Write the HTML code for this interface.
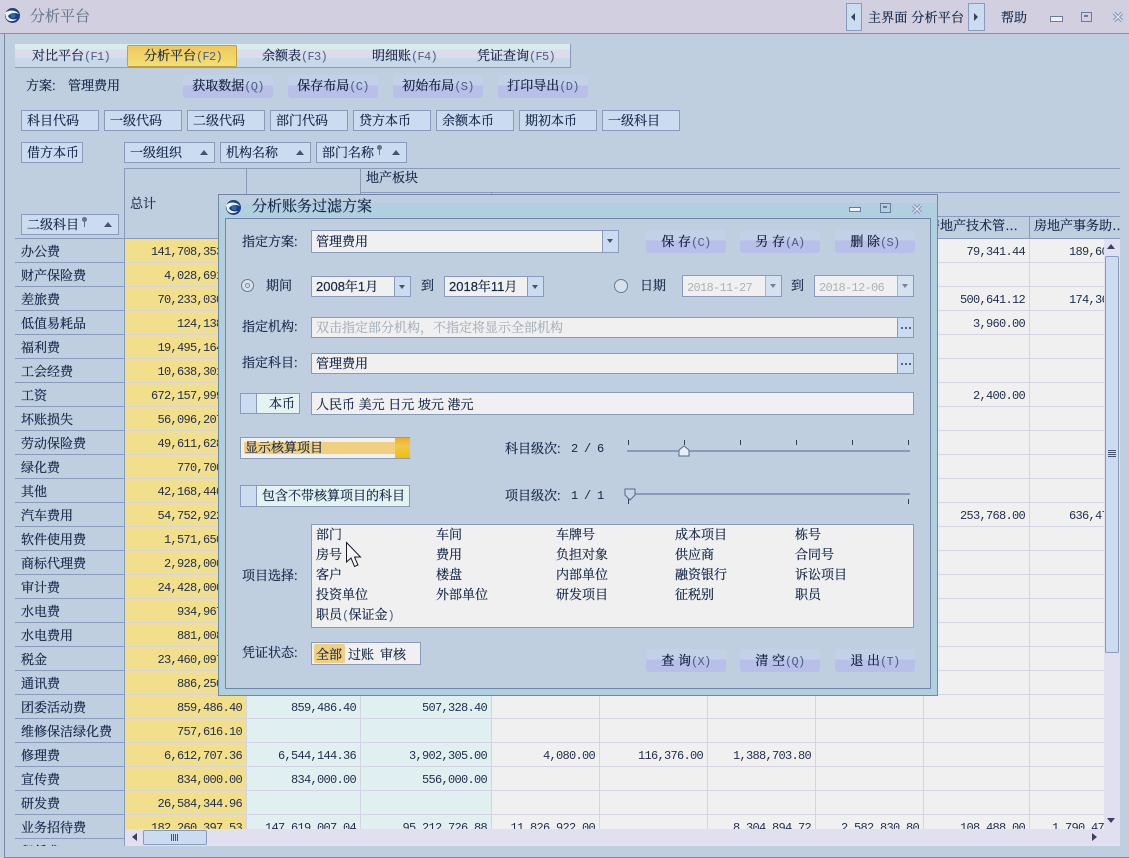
<!DOCTYPE html>
<html><head><meta charset="utf-8"><style>
html,body{margin:0;padding:0}
body{width:1129px;height:858px;overflow:hidden;position:relative;background:#bfcfe0;font:13px/22px "Liberation Sans","Noto Serif CJK SC","WenQuanYi Zen Hei",serif;color:#142648;-webkit-text-stroke:.2px}
.a{position:absolute;white-space:nowrap}
.m{font-family:"Liberation Mono",monospace;font-size:12px;letter-spacing:-.7px;-webkit-text-stroke:0}
.h{color:#4a6088}
.pb{position:absolute;box-sizing:border-box;height:21px;line-height:20px;border:1.5px solid #8a9abd;background:#ccdcf0;padding-left:5px;white-space:nowrap;letter-spacing:0}
.tri{position:absolute;width:0;height:0;border-left:4px solid transparent;border-right:4px solid transparent;border-bottom:5px solid #4a5070}
.btn{position:absolute;box-sizing:border-box;width:80px;height:23px;line-height:24px;text-align:center;border-radius:3px;background:linear-gradient(#c2d0e8 0,#c2d0e8 45%,#b8bfe8 45%,#b8bfe8 100%);white-space:nowrap;color:#101c38}
.fld{position:absolute;box-sizing:border-box;border:1.5px solid #8a9abd;background:#f0f0f0;padding-left:4px;white-space:nowrap}
.arr{position:absolute;right:0;top:0;bottom:0;width:15px;background:#ccdcf0;border-left:1.5px solid #8a9abd}
.arr:after{content:"";position:absolute;left:4px;top:8px;border-left:3px solid transparent;border-right:3px solid transparent;border-top:4px solid #4a5070}
.dots:after{content:"";position:absolute;left:3px;top:9px;width:2px;height:2px;background:#5a6080;box-shadow:4px 0 #5a6080,8px 0 #5a6080;border:0}
.r{position:absolute;left:15px;width:1089px;height:24px;box-sizing:border-box}
.r b{position:absolute;left:0;top:0;width:110px;height:24px;box-sizing:border-box;font-weight:normal;line-height:26px;padding-left:6px;background:#bfcfe0;border-bottom:1.5px solid #8a9abd;border-right:1.5px solid #8a9abd}
.r i{position:absolute;top:0;height:24px;box-sizing:border-box;font-style:normal;text-align:right;padding-right:4px;line-height:26px;background:#f0f0f0;border-bottom:1.5px solid #d4d4e4;border-right:1.5px solid #d4d4e4;font-family:"Liberation Mono",monospace;font-size:12px;letter-spacing:-.7px;color:#22304e;overflow:hidden;white-space:nowrap;-webkit-text-stroke:0}
.c0{left:110px;width:122px;background:#f2df8b!important}
.c1{left:232px;width:114px;background:#e0f0f0!important}
.c2{left:346px;width:131px;background:#e0f0f0!important}
.c3{left:477px;width:108px}.c4{left:585px;width:108px}.c5{left:693px;width:108px}.c6{left:801px;width:108px}
.c7{left:909px;width:106px}.c8{left:1015px;width:74px;border-right:0!important;padding-right:0!important;text-align:left!important;padding-left:0}
.line{position:absolute;background:#8a9abd}
</style></head><body>

<!-- title bar -->
<div class="a" style="left:0;top:0;width:1129px;height:33px;background:#d2d0e0;border-bottom:1.5px solid #8a90b0"></div>
<svg class="a" style="left:4px;top:7px" width="17" height="17" viewBox="0 0 17 17"><circle cx="8.5" cy="8.5" r="7.5" fill="#1c3f80"/><path d="M1 6C5 2 12 3 15 7C11 5 6 6 4 9C5 12 9 13 13 12C10 15 4 15 2 11Z" fill="#e8f0f8"/><circle cx="9" cy="8.5" r="2.6" fill="#2a68b0"/></svg>
<div class="a" style="left:30px;top:5px;font-size:15px;color:#6a7a90;letter-spacing:0;line-height:24px">分析平台</div>
<div class="a" style="left:846px;top:3px;width:16px;height:28px;box-sizing:border-box;background:#ccdcf0;border:1.5px solid #8a9abd"></div>
<div class="a" style="left:851px;top:13px;border-top:4px solid transparent;border-bottom:4px solid transparent;border-right:4px solid #3a4060"></div>
<div class="a" style="left:868px;top:7px;font-size:13px;letter-spacing:.2px">主界面 分析平台</div>
<div class="a" style="left:968px;top:3px;width:17px;height:28px;box-sizing:border-box;background:#ccdcf0;border:1.5px solid #8a9abd"></div>
<div class="a" style="left:974px;top:13px;border-top:4px solid transparent;border-bottom:4px solid transparent;border-left:4px solid #3a4060"></div>
<div class="a" style="left:1001px;top:7px">帮助</div>
<div class="a" style="left:1050px;top:16px;width:11px;height:4px;border:1px solid #6a7aa0;background:#f0f0f8"></div>
<div class="a" style="left:1081px;top:12px;width:9px;height:8px;border:1px solid #6a7aa0"></div>
<div class="a" style="left:1084px;top:15px;width:4px;height:2px;background:#6a7aa0"></div>
<svg class="a" style="left:1112px;top:11px" width="12" height="12"><path d="M2 2L10 10M10 2L2 10" stroke="#8a9abd" stroke-width="3.5"/><path d="M2 2L10 10M10 2L2 10" stroke="#e4ecf4" stroke-width="1.2"/></svg>

<!-- main frame -->
<div class="a" style="left:4px;top:33px;width:1px;height:825px;background:#7a88a8"></div>
<div class="a" style="left:4px;top:857px;width:1125px;height:1px;background:#7a88a8"></div>

<!-- tabs -->
<div class="a" style="left:15px;top:44px;width:556px;height:24px;box-sizing:border-box;border-bottom:1.5px solid #8a9abd;border-right:1px solid #8a9abd;background:linear-gradient(#d8eeea 0,#d8eeea 25%,#dcdcec 25%,#dcdcec 60%,#c8d8e8 60%)"></div>
<div class="a" style="left:127px;top:45px;width:110px;height:22px;box-sizing:border-box;border:1px solid #c0a040;border-radius:2px;background:linear-gradient(#f0c860,#f2e070)"></div>
<div class="a" style="left:32px;top:45px">对比平台<span class="m h">(F1)</span></div>
<div class="a" style="left:144px;top:45px">分析平台<span class="m h">(F2)</span></div>
<div class="a" style="left:262px;top:45px">余额表<span class="m h">(F3)</span></div>
<div class="a" style="left:372px;top:45px">明细账<span class="m h">(F4)</span></div>
<div class="a" style="left:477px;top:45px">凭证查询<span class="m h">(F5)</span></div>

<!-- toolbar -->
<div class="a" style="left:26px;top:75px">方案: </div>
<div class="a" style="left:68px;top:75px">管理费用</div>
<div class="btn" style="left:183px;top:75px;width:90px;line-height:22px">获取数据<span class="m h">(Q)</span></div>
<div class="btn" style="left:288px;top:75px;width:90px;line-height:22px">保存布局<span class="m h">(C)</span></div>
<div class="btn" style="left:393px;top:75px;width:90px;line-height:22px">初始布局<span class="m h">(S)</span></div>
<div class="btn" style="left:498px;top:75px;width:90px;line-height:22px">打印导出<span class="m h">(D)</span></div>

<!-- pivot fields -->
<div class="pb" style="left:21px;top:110px;width:78px">科目代码</div>
<div class="pb" style="left:104px;top:110px;width:78px">一级代码</div>
<div class="pb" style="left:187px;top:110px;width:78px">二级代码</div>
<div class="pb" style="left:270px;top:110px;width:78px">部门代码</div>
<div class="pb" style="left:353px;top:110px;width:78px">贷方本币</div>
<div class="pb" style="left:436px;top:110px;width:78px">余额本币</div>
<div class="pb" style="left:519px;top:110px;width:78px">期初本币</div>
<div class="pb" style="left:602px;top:110px;width:78px">一级科目</div>
<div class="pb" style="left:21px;top:142px;width:62px">借方本币</div>
<div class="pb" style="left:124px;top:142px;width:91px">一级组织<span class="tri" style="left:75px;top:7px"></span></div>
<div class="pb" style="left:220px;top:142px;width:91px">机构名称<span class="tri" style="left:75px;top:7px"></span></div>
<div class="pb" style="left:316px;top:142px;width:91px">部门名称<span class="a" style="left:60px;top:2px;width:5px;height:5px;border-radius:50%;background:#6a7090"></span><span class="a" style="left:62px;top:6px;width:1px;height:6px;background:#6a7090"></span><span class="tri" style="left:75px;top:7px"></span></div>
<div class="pb" style="left:21px;top:214px;width:98px">二级科目<span class="a" style="left:60px;top:2px;width:5px;height:5px;border-radius:50%;background:#6a7090"></span><span class="a" style="left:62px;top:6px;width:1px;height:6px;background:#6a7090"></span><span class="tri" style="left:82px;top:7px"></span></div>

<!-- grid header -->
<div class="line" style="left:124px;top:168px;width:996px;height:1px"></div>
<div class="line" style="left:360px;top:192px;width:760px;height:1px"></div>
<div class="line" style="left:491px;top:192px;width:1px;height:24px"></div>
<div class="line" style="left:360px;top:216px;width:760px;height:1px"></div>
<div class="line" style="left:124px;top:168px;width:1px;height:72px"></div>
<div class="line" style="left:246px;top:168px;width:1px;height:72px"></div>
<div class="line" style="left:360px;top:168px;width:1px;height:72px"></div>
<div class="line" style="left:1029px;top:216px;width:1px;height:23px"></div>
<div class="line" style="left:15px;top:238px;width:1105px;height:1.5px"></div>
<div class="a" style="left:130px;top:193px">总计</div>
<div class="a" style="left:366px;top:167px">地产板块</div>
<div class="a" style="left:927px;top:215px;width:102px;height:22px;overflow:hidden">房地产技术管…</div>
<div class="a" style="left:1034px;top:215px;width:86px;height:22px;overflow:hidden">房地产事务助…</div>

<!-- grid rows -->
<div class="a" style="left:0;top:239px;width:1129px;height:607px;overflow:hidden">
<div class="r" style="top:0"><b>办公费</b><i class="c0">141,708,353.20</i><i class="c1"></i><i class="c2"></i><i class="c3"></i><i class="c4"></i><i class="c5"></i><i class="c6"></i><i class="c7">79,341.44</i><i class="c8" style="padding-left:39px">189,600.00</i></div>
<div class="r" style="top:24px"><b>财产保险费</b><i class="c0">4,028,691.00</i><i class="c1"></i><i class="c2"></i><i class="c3"></i><i class="c4"></i><i class="c5"></i><i class="c6"></i><i class="c7"></i><i class="c8"></i></div>
<div class="r" style="top:48px"><b>差旅费</b><i class="c0">70,233,030.00</i><i class="c1"></i><i class="c2"></i><i class="c3"></i><i class="c4"></i><i class="c5"></i><i class="c6"></i><i class="c7">500,641.12</i><i class="c8" style="padding-left:39px">174,360.00</i></div>
<div class="r" style="top:72px"><b>低值易耗品</b><i class="c0">124,138.00</i><i class="c1"></i><i class="c2"></i><i class="c3"></i><i class="c4"></i><i class="c5"></i><i class="c6"></i><i class="c7">3,960.00</i><i class="c8"></i></div>
<div class="r" style="top:96px"><b>福利费</b><i class="c0">19,495,164.00</i><i class="c1"></i><i class="c2"></i><i class="c3"></i><i class="c4"></i><i class="c5"></i><i class="c6"></i><i class="c7"></i><i class="c8"></i></div>
<div class="r" style="top:120px"><b>工会经费</b><i class="c0">10,638,301.00</i><i class="c1"></i><i class="c2"></i><i class="c3"></i><i class="c4"></i><i class="c5"></i><i class="c6"></i><i class="c7"></i><i class="c8"></i></div>
<div class="r" style="top:144px"><b>工资</b><i class="c0">672,157,999.00</i><i class="c1"></i><i class="c2"></i><i class="c3"></i><i class="c4"></i><i class="c5"></i><i class="c6"></i><i class="c7">2,400.00</i><i class="c8"></i></div>
<div class="r" style="top:168px"><b>坏账损失</b><i class="c0">56,096,207.00</i><i class="c1"></i><i class="c2"></i><i class="c3"></i><i class="c4"></i><i class="c5"></i><i class="c6"></i><i class="c7"></i><i class="c8"></i></div>
<div class="r" style="top:192px"><b>劳动保险费</b><i class="c0">49,611,628.00</i><i class="c1"></i><i class="c2"></i><i class="c3"></i><i class="c4"></i><i class="c5"></i><i class="c6"></i><i class="c7"></i><i class="c8"></i></div>
<div class="r" style="top:216px"><b>绿化费</b><i class="c0">770,700.00</i><i class="c1"></i><i class="c2"></i><i class="c3"></i><i class="c4"></i><i class="c5"></i><i class="c6"></i><i class="c7"></i><i class="c8"></i></div>
<div class="r" style="top:240px"><b>其他</b><i class="c0">42,168,440.00</i><i class="c1"></i><i class="c2"></i><i class="c3"></i><i class="c4"></i><i class="c5"></i><i class="c6"></i><i class="c7"></i><i class="c8"></i></div>
<div class="r" style="top:264px"><b>汽车费用</b><i class="c0">54,752,922.00</i><i class="c1"></i><i class="c2"></i><i class="c3"></i><i class="c4"></i><i class="c5"></i><i class="c6"></i><i class="c7">253,768.00</i><i class="c8" style="padding-left:39px">636,470.00</i></div>
<div class="r" style="top:288px"><b>软件使用费</b><i class="c0">1,571,650.00</i><i class="c1"></i><i class="c2"></i><i class="c3"></i><i class="c4"></i><i class="c5"></i><i class="c6"></i><i class="c7"></i><i class="c8"></i></div>
<div class="r" style="top:312px"><b>商标代理费</b><i class="c0">2,928,000.00</i><i class="c1"></i><i class="c2"></i><i class="c3"></i><i class="c4"></i><i class="c5"></i><i class="c6"></i><i class="c7"></i><i class="c8"></i></div>
<div class="r" style="top:336px"><b>审计费</b><i class="c0">24,428,000.00</i><i class="c1"></i><i class="c2"></i><i class="c3"></i><i class="c4"></i><i class="c5"></i><i class="c6"></i><i class="c7"></i><i class="c8"></i></div>
<div class="r" style="top:360px"><b>水电费</b><i class="c0">934,967.00</i><i class="c1"></i><i class="c2"></i><i class="c3"></i><i class="c4"></i><i class="c5"></i><i class="c6"></i><i class="c7"></i><i class="c8"></i></div>
<div class="r" style="top:384px"><b>水电费用</b><i class="c0">881,008.00</i><i class="c1"></i><i class="c2"></i><i class="c3"></i><i class="c4"></i><i class="c5"></i><i class="c6"></i><i class="c7"></i><i class="c8"></i></div>
<div class="r" style="top:408px"><b>税金</b><i class="c0">23,460,097.00</i><i class="c1"></i><i class="c2"></i><i class="c3"></i><i class="c4"></i><i class="c5"></i><i class="c6"></i><i class="c7"></i><i class="c8"></i></div>
<div class="r" style="top:432px"><b>通讯费</b><i class="c0">886,250.00</i><i class="c1"></i><i class="c2"></i><i class="c3"></i><i class="c4"></i><i class="c5"></i><i class="c6"></i><i class="c7"></i><i class="c8"></i></div>
<div class="r" style="top:456px"><b>团委活动费</b><i class="c0">859,486.40</i><i class="c1">859,486.40</i><i class="c2">507,328.40</i><i class="c3"></i><i class="c4"></i><i class="c5"></i><i class="c6"></i><i class="c7"></i><i class="c8"></i></div>
<div class="r" style="top:480px"><b>维修保洁绿化费</b><i class="c0">757,616.10</i><i class="c1"></i><i class="c2"></i><i class="c3"></i><i class="c4"></i><i class="c5"></i><i class="c6"></i><i class="c7"></i><i class="c8"></i></div>
<div class="r" style="top:504px"><b>修理费</b><i class="c0">6,612,707.36</i><i class="c1">6,544,144.36</i><i class="c2">3,902,305.00</i><i class="c3">4,080.00</i><i class="c4">116,376.00</i><i class="c5">1,388,703.80</i><i class="c6"></i><i class="c7"></i><i class="c8"></i></div>
<div class="r" style="top:528px"><b>宣传费</b><i class="c0">834,000.00</i><i class="c1">834,000.00</i><i class="c2">556,000.00</i><i class="c3"></i><i class="c4"></i><i class="c5"></i><i class="c6"></i><i class="c7"></i><i class="c8"></i></div>
<div class="r" style="top:552px"><b>研发费</b><i class="c0">26,584,344.96</i><i class="c1"></i><i class="c2"></i><i class="c3"></i><i class="c4"></i><i class="c5"></i><i class="c6"></i><i class="c7"></i><i class="c8"></i></div>
<div class="r" style="top:576px"><b>业务招待费</b><i class="c0">182,260,397.53</i><i class="c1">147,619,007.04</i><i class="c2">95,212,726.88</i><i class="c3">11,826,922.00</i><i class="c4"></i><i class="c5">8,304,894.72</i><i class="c6">2,582,830.80</i><i class="c7">108,488.00</i><i class="c8" style="padding-left:22px">1,790,470.00</i></div>
<div class="r" style="top:600px"><b>租赁费</b></div>
</div>

<!-- scrollbars -->
<div class="a" style="left:1104px;top:239px;width:16px;height:607px;background:#e0e0f0"></div>
<div class="tri" style="left:1107px;top:244px;border-bottom-color:#3a4060"></div>
<div class="a" style="left:1105px;top:256px;width:14px;height:397px;box-sizing:border-box;background:#ccdcf0;border:1px solid #8a9abd;border-radius:2px"></div>
<div class="a" style="left:1108px;top:450px;width:8px;height:7px;background:repeating-linear-gradient(#4a5070 0 1px,transparent 1px 2px)"></div>
<div class="a" style="left:1107px;top:818px;border-left:4px solid transparent;border-right:4px solid transparent;border-top:5px solid #3a4060"></div>
<div class="a" style="left:125px;top:829px;width:995px;height:17px;background:#e0e0f0"></div>
<div class="a" style="left:132px;top:833px;border-top:4px solid transparent;border-bottom:4px solid transparent;border-right:5px solid #3a4060"></div>
<div class="a" style="left:143px;top:830px;width:64px;height:15px;box-sizing:border-box;background:#ccdcf0;border:1px solid #8a9abd;border-radius:2px"></div>
<div class="a" style="left:171px;top:834px;width:7px;height:7px;background:repeating-linear-gradient(90deg,#4a5070 0 1px,transparent 1px 2px)"></div>
<div class="a" style="left:1092px;top:833px;border-top:4px solid transparent;border-bottom:4px solid transparent;border-left:5px solid #3a4060"></div>

<!-- dialog -->
<div class="a" style="left:218px;top:194px;width:720px;height:502px;box-sizing:border-box;border:1px solid #7088a8;background:linear-gradient(#bfcfe0 0,#bfcfe0 8px,#b0d0e0 8px)"></div>
<svg class="a" style="left:225px;top:199px" width="17" height="17" viewBox="0 0 17 17"><circle cx="8.5" cy="8.5" r="7.5" fill="#1c3f80"/><path d="M1 6C5 2 12 3 15 7C11 5 6 6 4 9C5 12 9 13 13 12C10 15 4 15 2 11Z" fill="#e8f0f8"/><circle cx="9" cy="8.5" r="2.6" fill="#2a68b0"/></svg>
<div class="a" style="left:252px;top:196px;font-size:15px;line-height:22px">分析账务过滤方案</div>
<div class="a" style="left:849px;top:207px;width:10px;height:3px;border:1px solid #6a7aa0;background:#f0f0f8"></div>
<div class="a" style="left:880px;top:203px;width:9px;height:8px;border:1px solid #6a7aa0"></div>
<div class="a" style="left:883px;top:206px;width:4px;height:2px;background:#6a7aa0"></div>
<svg class="a" style="left:911px;top:203px" width="12" height="12"><path d="M2 2L10 10M10 2L2 10" stroke="#8a9abd" stroke-width="3.5"/><path d="M2 2L10 10M10 2L2 10" stroke="#e4ecf4" stroke-width="1.2"/></svg>
<div class="a" style="left:225px;top:218px;width:706px;height:471px;box-sizing:border-box;border:1px solid #7088a8;background:#bfcfe0"></div>

<div class="a" style="left:242px;top:231px">指定方案:</div>
<div class="fld" style="left:311px;top:230px;width:308px;height:23px;line-height:22px">管理费用<span class="arr"></span></div>
<div class="btn" style="left:646px;top:230px">保 存<span class="m h">(C)</span></div>
<div class="btn" style="left:740px;top:230px">另 存<span class="m h">(A)</span></div>
<div class="btn" style="left:835px;top:230px">删 除<span class="m h">(S)</span></div>

<div class="a" style="left:241px;top:279px;width:13px;height:13px;box-sizing:border-box;border:1.5px solid #6a7a98;border-radius:50%;background:#d8e0ea"></div>
<div class="a" style="left:245px;top:283px;width:5px;height:5px;border-radius:50%;border:1px solid #7a88a0;box-sizing:border-box"></div>
<div class="a" style="left:266px;top:275px">期间</div>
<div class="fld" style="left:311px;top:276px;width:100px;height:21px;line-height:20px">2008年1月<span class="arr"></span></div>
<div class="a" style="left:421px;top:275px">到</div>
<div class="fld" style="left:444px;top:276px;width:100px;height:21px;line-height:20px">2018年11月<span class="arr"></span></div>
<div class="a" style="left:614px;top:279px;width:14px;height:14px;box-sizing:border-box;border:1.5px solid #6a7a98;border-radius:50%;background:#d8e0ea"></div>
<div class="a" style="left:640px;top:275px">日期</div>
<div class="fld" style="left:682px;top:275px;width:100px;height:22px;line-height:21px;color:#aab2bc"><span class="m">2018-11-27</span><span class="arr" style="opacity:.7"></span></div>
<div class="a" style="left:791px;top:275px">到</div>
<div class="fld" style="left:814px;top:275px;width:100px;height:22px;line-height:21px;color:#aab2bc"><span class="m">2018-12-06</span><span class="arr" style="opacity:.7"></span></div>

<div class="a" style="left:242px;top:316px">指定机构:</div>
<div class="fld" style="left:311px;top:317px;width:603px;height:21px;line-height:20px;color:#a8b0ba">双击指定部分机构，不指定将显示全部机构<span class="arr dots"></span></div>
<div class="a" style="left:242px;top:352px">指定科目:</div>
<div class="fld" style="left:311px;top:353px;width:603px;height:21px;line-height:20px">管理费用<span class="arr dots"></span></div>

<div class="a" style="left:240px;top:393px;width:60px;height:21px;box-sizing:border-box;border:1.5px solid #8a9abd;background:#e4f2f2"></div>
<div class="a" style="left:241px;top:394px;width:15px;height:19px;background:#ccdcf0;border-right:1px solid #8a9abd"></div>
<div class="a" style="left:269px;top:393px">本币</div>
<div class="fld" style="left:311px;top:392px;width:603px;height:23px;line-height:24px">人民币 美元 日元 坡元 港元</div>

<div class="a" style="left:240px;top:437px;width:170px;height:22px;box-sizing:border-box;border:1.5px solid #8a9abd;background:#f0f0f0"></div>
<div class="a" style="left:244px;top:442px;width:151px;height:12px;background:#f0d080"></div>
<div class="a" style="left:395px;top:438px;width:15px;height:20px;background:linear-gradient(#eeb020,#f0c850 40%,#f0c000)"></div>
<div class="a" style="left:245px;top:437px">显示核算项目</div>
<div class="a" style="left:505px;top:438px">科目级次:</div>
<div class="a m" style="left:571px;top:438px">2 / 6</div>
<div class="a" style="left:627px;top:450px;width:283px;height:1.5px;background:#8a9abd"></div>
<div class="a" style="left:628px;top:440px;width:1px;height:5px;background:#3a4060;box-shadow:56px 0 #3a4060,112px 0 #3a4060,168px 0 #3a4060,224px 0 #3a4060,280px 0 #3a4060"></div>
<svg class="a" style="left:678px;top:445px" width="12" height="12"><path d="M1 11V5L6 1L11 5V11Z" fill="#e8eef4" stroke="#5a6a8a"/></svg>

<div class="a" style="left:240px;top:485px;width:170px;height:22px;box-sizing:border-box;border:1.5px solid #8a9abd;background:#e4f2f2"></div>
<div class="a" style="left:241px;top:486px;width:15px;height:20px;background:#ccdcf0;border-right:1px solid #8a9abd"></div>
<div class="a" style="left:262px;top:485px">包含不带核算项目的科目</div>
<div class="a" style="left:505px;top:485px">项目级次:</div>
<div class="a m" style="left:571px;top:485px">1 / 1</div>
<div class="a" style="left:627px;top:493px;width:283px;height:1.5px;background:#8a9abd"></div>
<div class="a" style="left:628px;top:499px;width:1px;height:5px;background:#3a4060;box-shadow:280px 0 #3a4060"></div>
<svg class="a" style="left:624px;top:488px" width="12" height="13"><path d="M1 1V7L6 12L11 7V1Z" fill="#c8d4e8" stroke="#5a6a8a"/></svg>

<div class="a" style="left:242px;top:565px">项目选择:</div>
<div class="fld" style="left:311px;top:524px;width:603px;height:104px"></div>
<div class="a" style="left:316px;top:524px">部门</div><div class="a" style="left:436px;top:524px">车间</div><div class="a" style="left:556px;top:524px">车牌号</div><div class="a" style="left:675px;top:524px">成本项目</div><div class="a" style="left:795px;top:524px">栋号</div>
<div class="a" style="left:316px;top:544px">房号</div><div class="a" style="left:436px;top:544px">费用</div><div class="a" style="left:556px;top:544px">负担对象</div><div class="a" style="left:675px;top:544px">供应商</div><div class="a" style="left:795px;top:544px">合同号</div>
<div class="a" style="left:316px;top:564px">客户</div><div class="a" style="left:436px;top:564px">楼盘</div><div class="a" style="left:556px;top:564px">内部单位</div><div class="a" style="left:675px;top:564px">融资银行</div><div class="a" style="left:795px;top:564px">诉讼项目</div>
<div class="a" style="left:316px;top:584px">投资单位</div><div class="a" style="left:436px;top:584px">外部单位</div><div class="a" style="left:556px;top:584px">研发项目</div><div class="a" style="left:675px;top:584px">征税别</div><div class="a" style="left:795px;top:584px">职员</div>
<div class="a" style="left:316px;top:604px">职员<span class="m h">(</span>保证金<span class="m h">)</span></div>

<div class="a" style="left:242px;top:642px">凭证状态:</div>
<div class="fld" style="left:311px;top:642px;width:110px;height:23px"></div>
<div class="a" style="left:314px;top:644px;width:31px;height:19px;background:#f0d080;border-radius:2px"></div>
<div class="a" style="left:316px;top:644px">全部</div>
<div class="a" style="left:348px;top:644px">过账</div>
<div class="a" style="left:380px;top:644px">审核</div>
<div class="btn" style="left:646px;top:649px">查 询<span class="m h">(X)</span></div>
<div class="btn" style="left:740px;top:649px">清 空<span class="m h">(Q)</span></div>
<div class="btn" style="left:835px;top:649px">退 出<span class="m h">(T)</span></div>

<!-- cursor -->
<svg class="a" style="left:345px;top:541px" width="18" height="28" viewBox="0 0 18 28"><path d="M1.5 1.5V21L6 17L9.5 25.5L13 24L9.5 16H15.5Z" fill="#f4f4f4" stroke="#1a1a2a" stroke-width="1"/></svg>
</body></html>
